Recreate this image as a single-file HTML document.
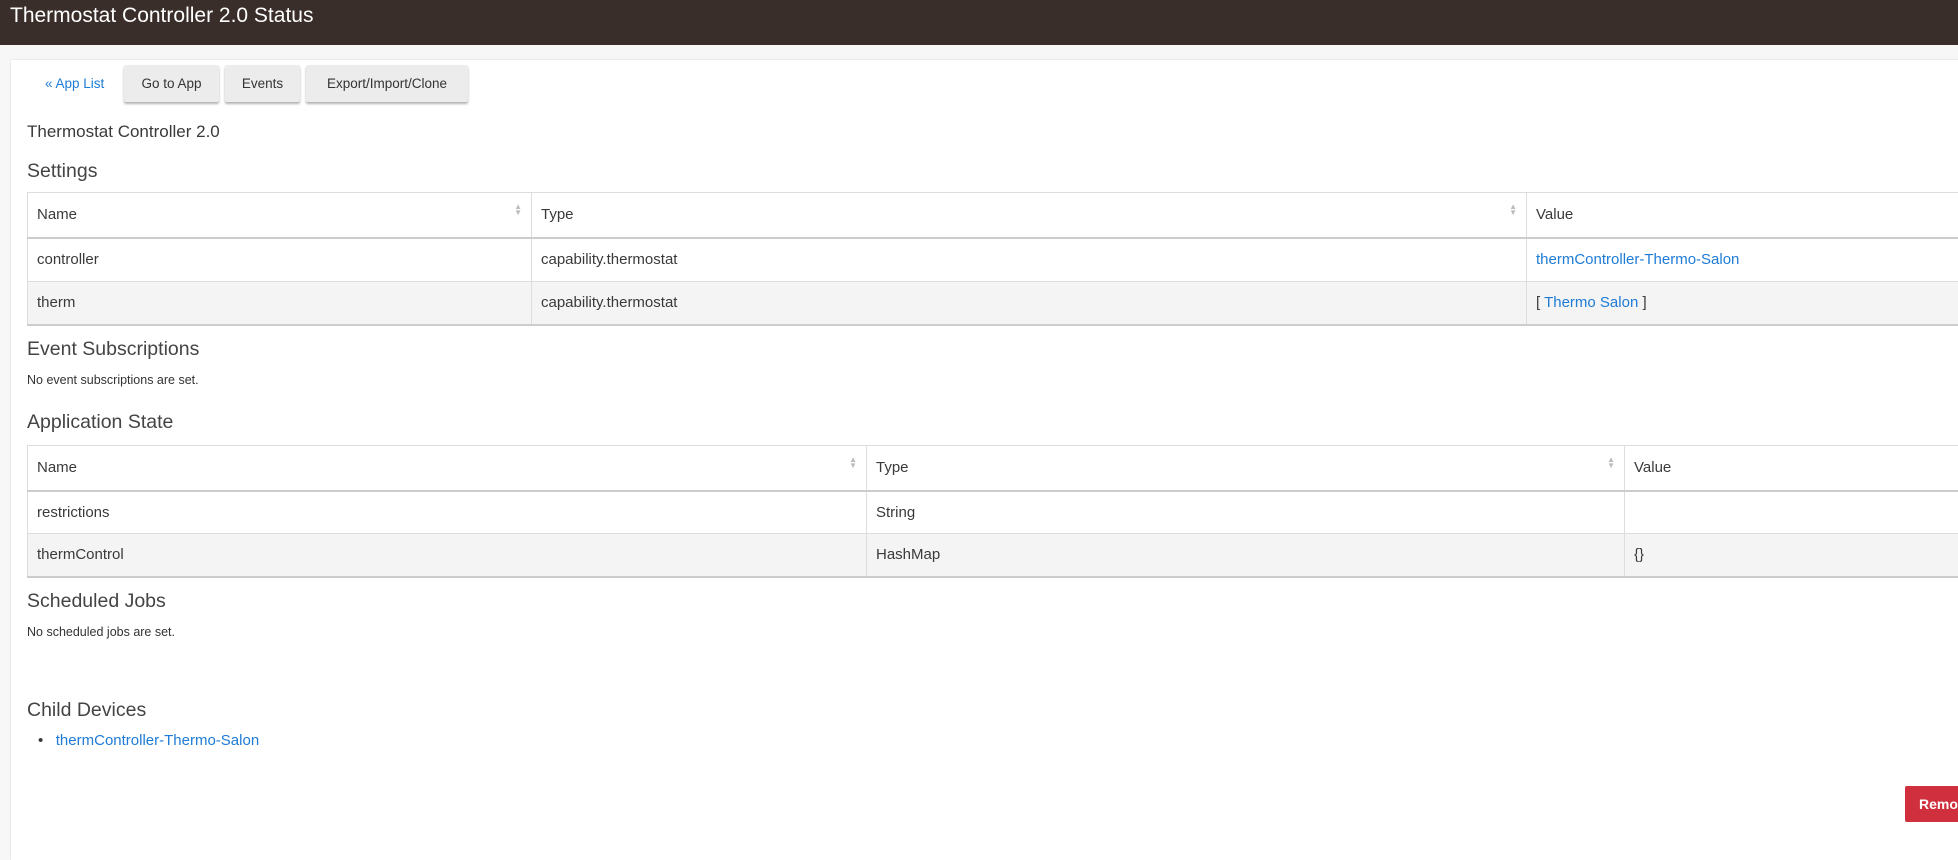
<!DOCTYPE html>
<html><head><meta charset="utf-8"><style>
*{box-sizing:border-box;margin:0;padding:0}
body{width:1958px;height:834px;overflow:hidden;background:#f7f7f7;font-family:"Liberation Sans",sans-serif;color:#3a3a3a;position:relative}
.hdr{position:absolute;left:0;top:0;width:1958px;height:45px;background:#3a2e2b;color:#fff;font-size:21px;padding:4px 0 0 10px}
.card{position:absolute;left:11px;top:60px;width:1960px;height:800px;background:#fff;box-shadow:0 0 2px rgba(0,0,0,.15)}
.a{position:absolute;color:#1e7bd6;text-decoration:none}
.btn{position:absolute;top:65px;height:37px;background:#ececec;color:#333;font-size:13.5px;text-align:center;line-height:37px;border-radius:2px;box-shadow:0 2px 2px rgba(0,0,0,.3)}
.t{position:absolute;white-space:nowrap}
.h{font-size:19.5px;color:#444}
.s{font-size:12.5px;color:#333}
table{position:absolute;left:27px;width:1960px;border-collapse:collapse;font-size:15px;color:#3a3a3a}
td{border:1px solid #ddd;padding:0 9px;vertical-align:middle}
tr.hd td{border-bottom:2px solid #ccc}
tr.g td{background:#f4f4f4}
tr.last td{border-bottom:2px solid #ccc}
.ar{float:right;color:#bbb;font-size:8px;line-height:6px;margin-top:-2px}
</style></head><body>
<div class="hdr">Thermostat Controller 2.0 Status</div>
<div class="card"></div>
<a class="a" style="left:45px;top:76px;font-size:13.5px">« App List</a>
<div class="btn" style="left:124px;width:95px">Go to App</div>
<div class="btn" style="left:225px;width:75px">Events</div>
<div class="btn" style="left:306px;width:162px">Export/Import/Clone</div>
<div class="t" style="left:27px;top:122px;font-size:17px">Thermostat Controller 2.0</div>
<div class="t h" style="left:27px;top:160px">Settings</div>
<table style="top:192px">
<tr class="hd" style="height:45px"><td style="width:504px">Name<span class="ar">▲<br>▼</span></td><td style="width:995px">Type<span class="ar">▲<br>▼</span></td><td>Value</td></tr>
<tr style="height:44px"><td>controller</td><td>capability.thermostat</td><td><span style="color:#1e7bd6">thermController-Thermo-Salon</span></td></tr>
<tr class="g last" style="height:43px"><td>therm</td><td>capability.thermostat</td><td>[ <span style="color:#1e7bd6">Thermo Salon</span> ]</td></tr>
</table>
<div class="t h" style="left:27px;top:338px">Event Subscriptions</div>
<div class="t s" style="left:27px;top:373px">No event subscriptions are set.</div>
<div class="t h" style="left:27px;top:411px">Application State</div>
<table style="top:445px">
<tr class="hd" style="height:45px"><td style="width:839px">Name<span class="ar">▲<br>▼</span></td><td style="width:758px">Type<span class="ar">▲<br>▼</span></td><td>Value</td></tr>
<tr style="height:43px"><td>restrictions</td><td>String</td><td></td></tr>
<tr class="g last" style="height:43px"><td>thermControl</td><td>HashMap</td><td>{}</td></tr>
</table>
<div class="t h" style="left:27px;top:590px">Scheduled Jobs</div>
<div class="t s" style="left:27px;top:625px">No scheduled jobs are set.</div>
<div class="t h" style="left:27px;top:699px">Child Devices</div>
<div class="t" style="left:38px;top:732px;font-size:15px">•&nbsp;&nbsp; <span style="color:#1e7bd6">thermController-Thermo-Salon</span></div>
<div style="position:absolute;left:1905px;top:786px;width:80px;height:36px;background:#d02f3d;color:#fff;font-size:14px;font-weight:bold;line-height:36px;padding-left:14px;border-radius:2px">Remove</div>
</body></html>
